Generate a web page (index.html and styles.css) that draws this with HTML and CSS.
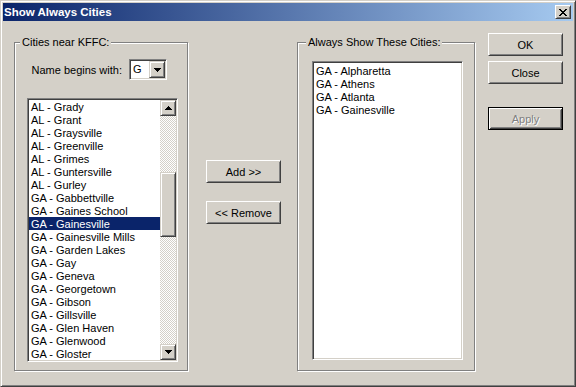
FILE: index.html
```html
<html>
  <head>
    <title>Show Always Cities</title>
    <link rel="stylesheet" href="styles.css">
  </head>
  <body>
    <div class="window">
      <div class="titlebar">
        <span class="title">Show Always Cities</span>
        <button class="caption-btn">
          <svg width="8" height="7" viewBox="0 0 8 7"><path d="M0 0h2v1H0z M6 0h2v1H6z M1 1h2v1H1z M5 1h2v1H5z M2 2h4v1H2z M3 3h2v1H3z M2 4h4v1H2z M1 5h2v1H1z M5 5h2v1H5z M0 6h2v1H0z M6 6h2v1H6z" fill="#000"/></svg>
        </button>
      </div>
      <div class="client">
        <fieldset class="group group-cities">
          <legend>Cities near KFFC:</legend>
          <div class="filter-row">
            <label>Name begins with:</label>
            <div class="combo">
              <span class="combo-value">G</span>
              <span class="combo-btn">
                <svg width="7" height="4" viewBox="0 0 7 4"><path d="M0 0h7v1H6v1H5v1H4v1H3V3H2V2H1V1H0z" fill="#000"/></svg>
              </span>
            </div>
          </div>
          <div class="listbox listbox-cities">
            <ul class="items">
              <li>AL - Grady</li>
              <li>AL - Grant</li>
              <li>AL - Graysville</li>
              <li>AL - Greenville</li>
              <li>AL - Grimes</li>
              <li>AL - Guntersville</li>
              <li>AL - Gurley</li>
              <li>GA - Gabbettville</li>
              <li>GA - Gaines School</li>
              <li class="selected">GA - Gainesville</li>
              <li>GA - Gainesville Mills</li>
              <li>GA - Garden Lakes</li>
              <li>GA - Gay</li>
              <li>GA - Geneva</li>
              <li>GA - Georgetown</li>
              <li>GA - Gibson</li>
              <li>GA - Gillsville</li>
              <li>GA - Glen Haven</li>
              <li>GA - Glenwood</li>
              <li>GA - Gloster</li>
            </ul>
            <div class="scrollbar">
              <span class="scroll-btn">
                <svg width="7" height="4" viewBox="0 0 7 4"><path d="M3 0h1v1h1v1h1v1h1v1H0V3h1V2h1V1h1z" fill="#000"/></svg>
              </span>
              <div class="track">
                <div class="thumb"></div>
              </div>
              <span class="scroll-btn">
                <svg width="7" height="4" viewBox="0 0 7 4"><path d="M0 0h7v1H6v1H5v1H4v1H3V3H2V2H1V1H0z" fill="#000"/></svg>
              </span>
            </div>
          </div>
        </fieldset>

        <div class="move-buttons">
          <button class="btn">Add &gt;&gt;</button>
          <button class="btn">&lt;&lt; Remove</button>
        </div>

        <fieldset class="group group-always">
          <legend>Always Show These Cities:</legend>
          <div class="listbox listbox-always">
            <ul class="items">
              <li>GA - Alpharetta</li>
              <li>GA - Athens</li>
              <li>GA - Atlanta</li>
              <li>GA - Gainesville</li>
            </ul>
          </div>
        </fieldset>

        <div class="dialog-buttons">
          <button class="btn">OK</button>
          <button class="btn btn-close">Close</button>
          <button class="btn btn-default btn-apply" disabled>Apply</button>
        </div>
      </div>
    </div>
  </body>
</html>
```

FILE: styles.css
```css
body {
  margin: 0;
  font-family: "Liberation Sans", Arial, sans-serif;
  font-size: 11px;
  color: #000000;
  background: #d4d0c8;
}

/* window frame */
.window {
  width: 576px;
  height: 387px;
  box-sizing: border-box;
  border: 1px solid;
  border-color: #d4d0c8 #404040 #404040 #d4d0c8;
  box-shadow: inset 1px 1px 0 #ffffff, inset -1px -1px 0 #808080;
  padding: 2px;
  background: #d4d0c8;
  display: flex;
  flex-direction: column;
}

.titlebar {
  height: 18px;
  margin-bottom: 1px;
  background: linear-gradient(90deg, #0a246a, #a6caf0);
  display: flex;
  align-items: center;
  justify-content: space-between;
}

.title {
  color: #ffffff;
  font-weight: bold;
  font-size: 11.5px;
  padding-left: 1px;
}

.caption-btn {
  width: 16px;
  height: 14px;
  margin-right: 2px;
  padding: 0;
  box-sizing: border-box;
  background: #d4d0c8;
  border: 1px solid;
  border-color: #ffffff #404040 #404040 #ffffff;
  box-shadow: inset 1px 1px 0 #d4d0c8, inset -1px -1px 0 #808080;
  display: flex;
  align-items: center;
  justify-content: center;
}

.caption-btn svg {
  display: block;
}

.client {
  flex: 1;
  display: flex;
  align-items: flex-start;
}

/* group boxes */
.group {
  margin: 14px 0 0 0;
  padding: 0;
  height: 335px;
  box-sizing: border-box;
  border: 1px solid #808080;
  box-shadow: 1px 1px 0 #ffffff, inset 1px 1px 0 #ffffff;
  min-width: 0;
}

.group legend {
  padding: 0 2px;
  line-height: 13px;
  background: #d4d0c8;
}

.group-cities {
  width: 174px;
  margin-left: 11px;
}

.group-cities legend {
  margin-left: 5px;
}

.group-always {
  width: 178px;
  margin-left: 16px;
}

.group-always legend {
  margin-left: 8px;
}

.filter-row {
  margin-top: 10px;
  padding-right: 20px;
  display: flex;
  align-items: center;
  justify-content: flex-end;
  gap: 7px;
}

/* sunken controls */
.combo,
.listbox {
  box-sizing: border-box;
  background: #ffffff;
  border: 1px solid;
  border-color: #808080 #ffffff #ffffff #808080;
  box-shadow: inset 1px 1px 0 #404040, inset -1px -1px 0 #d4d0c8;
  padding: 1px;
}

.combo {
  width: 38px;
  height: 21px;
  display: flex;
}

.combo-value {
  flex: 1;
  padding-left: 2px;
  line-height: 17px;
}

.combo-btn,
.scroll-btn,
.thumb {
  box-sizing: border-box;
  background: #d4d0c8;
  border: 1px solid;
  border-color: #d4d0c8 #404040 #404040 #d4d0c8;
  box-shadow: inset 1px 1px 0 #ffffff, inset -1px -1px 0 #808080;
}

.combo-btn {
  width: 16px;
  height: 17px;
  display: flex;
  align-items: center;
  justify-content: center;
}

.listbox {
  display: flex;
}

.listbox-cities {
  width: 151px;
  height: 264px;
  margin: 18px 0 0 12px;
}

.listbox-always {
  width: 151px;
  height: 299px;
  margin: 12px 0 0 14px;
}

.items {
  list-style: none;
  margin: 0;
  padding: 0;
  flex: 1;
  overflow: hidden;
}

.listbox-always .items {
  padding-top: 1px;
}

.items li {
  height: 13px;
  line-height: 14px;
  padding-left: 2px;
  white-space: nowrap;
}

.items li.selected {
  background: #0a246a;
  color: #ffffff;
}

.scrollbar {
  width: 16px;
  display: flex;
  flex-direction: column;
}

.scroll-btn {
  height: 16px;
  display: flex;
  align-items: center;
  justify-content: center;
}

.track {
  flex: 1;
  background: repeating-conic-gradient(#ffffff 0 25%, #d4d0c8 0 50%) 0 0 / 2px 2px;
}

.thumb {
  height: 65px;
  margin-top: 56px;
}

/* push buttons */
.btn {
  width: 75px;
  height: 23px;
  padding: 0;
  box-sizing: border-box;
  font-family: inherit;
  font-size: 11px;
  color: #000000;
  background: #d4d0c8;
  border: 1px solid;
  border-color: #ffffff #404040 #404040 #ffffff;
  box-shadow: inset 1px 1px 0 #d4d0c8, inset -1px -1px 0 #808080;
  display: block;
}

.btn-default {
  border-color: #000000;
  box-shadow: inset 1px 1px 0 #ffffff, inset -1px -1px 0 #404040,
    inset 2px 2px 0 #d4d0c8, inset -2px -2px 0 #808080;
}

.btn:disabled {
  color: #808080;
  text-shadow: 1px 1px 0 #ffffff;
}

.move-buttons {
  margin: 138px 0 0 18px;
  display: flex;
  flex-direction: column;
  gap: 18px;
}

.dialog-buttons {
  margin: 11px 0 0 13px;
  display: flex;
  flex-direction: column;
}

.btn-close {
  margin-top: 5px;
}

.btn-apply {
  margin-top: 23px;
}
```
